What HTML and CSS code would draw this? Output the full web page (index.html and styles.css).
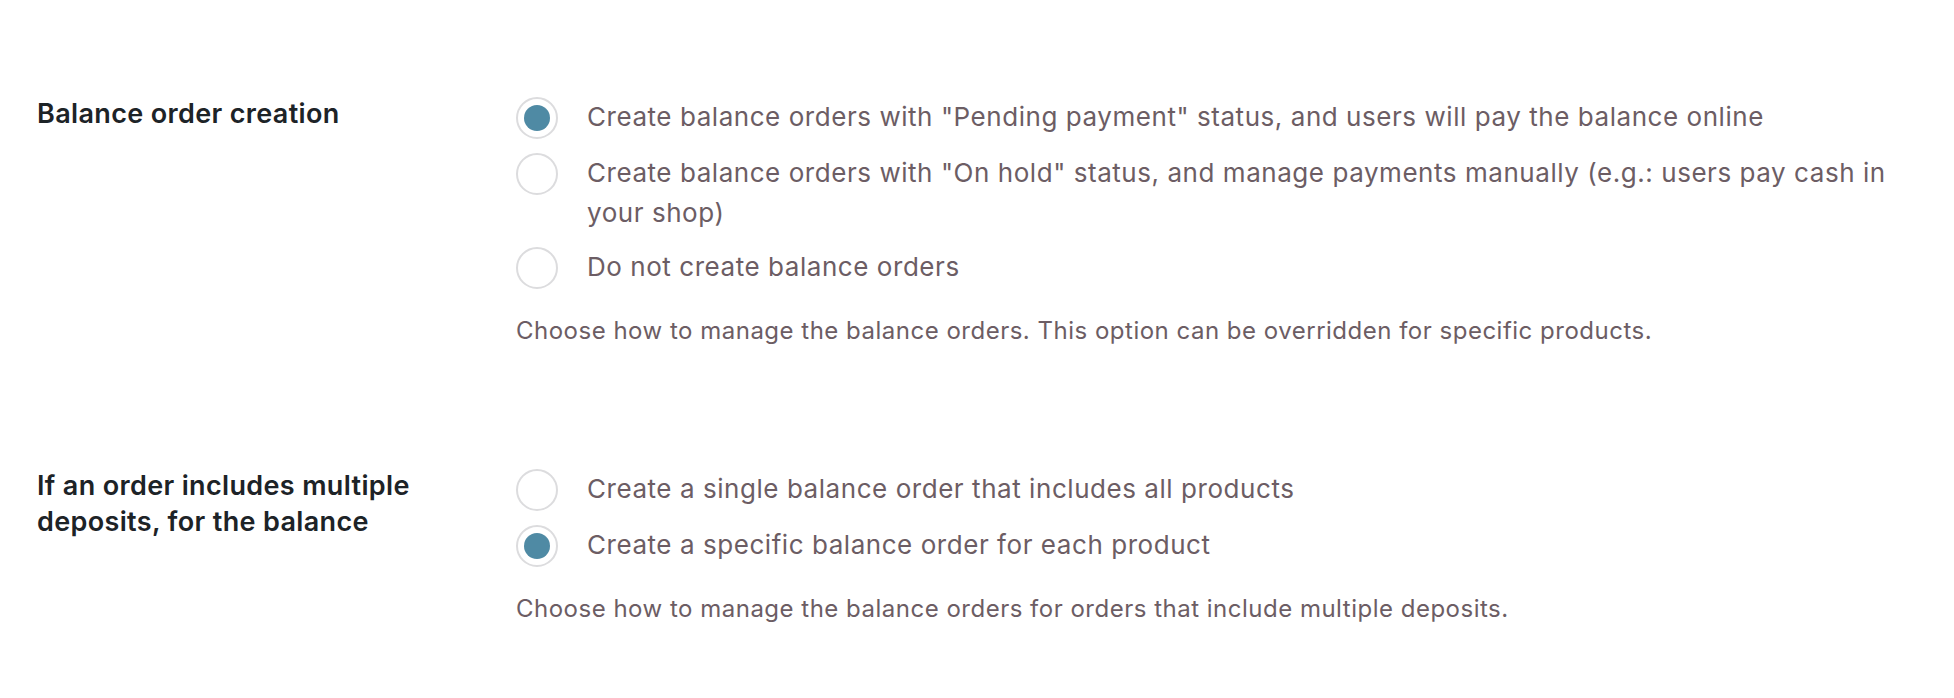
FILE: index.html
```html
<!DOCTYPE html>
<html lang="en">
  <head>
    <meta charset="UTF-8" />
    <meta name="viewport" content="width=device-width, initial-scale=1.0" />
    <title>Balance settings</title>
    <link rel="stylesheet" href="styles.css">
  </head>
  <body>
    <div id="settings">
      <div class="setting-row">
        <div class="setting-label">Balance order creation</div>
        <div class="setting-field">
          <ul class="choices">
            <li>
              <label>
                <input type="radio" name="balance_create" checked />
                <span class="choice-text">Create balance orders with "Pending payment" status, and users will pay the balance online</span>
              </label>
            </li>
            <li>
              <label>
                <input type="radio" name="balance_create" />
                <span class="choice-text">Create balance orders with "On hold" status, and manage payments manually (e.g.: users pay cash in your shop)</span>
              </label>
            </li>
            <li>
              <label>
                <input type="radio" name="balance_create" />
                <span class="choice-text">Do not create balance orders</span>
              </label>
            </li>
          </ul>
          <p class="description">Choose how to manage the balance orders. This option can be overridden for specific products.</p>
        </div>
      </div>

      <div class="setting-row">
        <div class="setting-label">If an order includes multiple deposits, for the balance</div>
        <div class="setting-field">
          <ul class="choices">
            <li>
              <label>
                <input type="radio" name="balance_multiple" />
                <span class="choice-text">Create a single balance order that includes all products</span>
              </label>
            </li>
            <li>
              <label>
                <input type="radio" name="balance_multiple" checked />
                <span class="choice-text">Create a specific balance order for each product</span>
              </label>
            </li>
          </ul>
          <p class="description">Choose how to manage the balance orders for orders that include multiple deposits.</p>
        </div>
      </div>
    </div>
  </body>
</html>
```

FILE: styles.css
```css
* {
  margin: 0;
  padding: 0;
  box-sizing: border-box;
}
html,
body {
  width: 100%;
  height: 100%;
  background-color: #ffffff;
}
#settings {
  display: flex;
  flex-direction: column;
  gap: 120px;
  padding: 97px 34px 0 37px;
  font-family: Inter, "Noto Sans", sans-serif;
}
.setting-row {
  display: flex;
  align-items: flex-start;
}
.setting-label {
  width: 479px;
  flex-shrink: 0;
  padding-right: 80px;
  margin-top: -1px;
  font-size: 27px;
  font-weight: 600;
  letter-spacing: 0.35px;
  line-height: 36px;
  color: #1d2327;
}
.setting-field {
  flex: 1;
}
.choices {
  list-style: none;
}
.choices li {
  margin-bottom: 14px;
}
.choices li:last-child {
  margin-bottom: 0;
}
.choices label {
  display: flex;
  align-items: flex-start;
  cursor: pointer;
}
.choices input[type="radio"] {
  appearance: none;
  -webkit-appearance: none;
  width: 42px;
  height: 42px;
  flex-shrink: 0;
  border: 2px solid #dcdcde;
  border-radius: 50%;
  background-color: #ffffff;
  margin-right: 29px;
  display: flex;
  align-items: center;
  justify-content: center;
}
.choices input[type="radio"]:checked::before {
  content: "";
  width: 26px;
  height: 26px;
  border-radius: 50%;
  background-color: #4f8aa4;
}
.choice-text {
  font-size: 26px;
  letter-spacing: 0.55px;
  line-height: 40px;
  color: #6c5d64;
}
.description {
  margin-top: 24px;
  font-size: 24px;
  letter-spacing: 0.5px;
  line-height: 36px;
  color: #6c5d64;
}
```
